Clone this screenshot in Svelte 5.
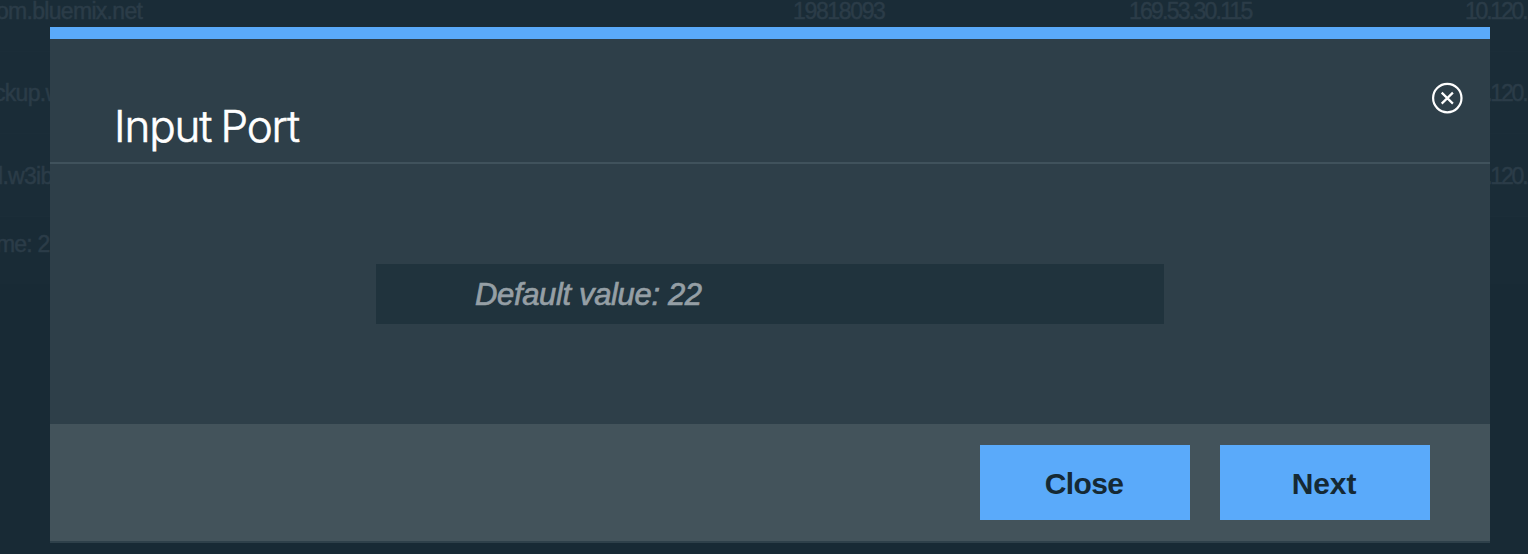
<script>
  const rows = [
    { name: 'om.bluemix.net', shift: -4, id: '19818093', publicIp: '169.53.30.115', privateIp: '10.120.' },
    { name: 'ckup.w', shift: -6, id: '', publicIp: '', privateIp: '10.120.' },
    { name: 'l.w3ib', shift: -2, id: '', publicIp: '', privateIp: '10.120.1' }
  ];
</script>

<div class="page">
  <div class="table">
    {#each rows as row}
      <div class="row">
        <span class="name" style="margin-left: {row.shift}px">{row.name}</span>
        <span class="id">{row.id}</span>
        <span class="public">{row.publicIp}</span>
        <span class="private">{row.privateIp}</span>
      </div>
    {/each}
    <div class="summary"><span>me: 2</span></div>
  </div>

  <div class="dialog" role="dialog" aria-labelledby="dialog-title">
    <header>
      <h1 id="dialog-title">Input Port</h1>
      <button class="dismiss" aria-label="Close dialog">
        <svg width="32" height="32" viewBox="0 0 32 32" fill="none" stroke="#fff" stroke-width="2.2">
          <circle cx="16.3" cy="16.1" r="14.2" />
          <path d="M10.7 10.6 21.9 21.6M21.9 10.6 10.7 21.6" />
        </svg>
      </button>
    </header>
    <main>
      <div class="field"><span>Default value: 22</span></div>
    </main>
    <footer>
      <button class="action"><span class="close">Close</span></button>
      <button class="action"><span class="next">Next</span></button>
    </footer>
  </div>
</div>

<style>
  :global(body) { margin: 0; }
  .page {
    position: relative;
    width: 1528px;
    height: 554px;
    overflow: hidden;
    background: #182a35;
    font-family: "Liberation Sans", Arial, sans-serif;
  }
  .table {
    margin-top: -31px;
    color: #2b3c48;
    font-size: 23px;
    -webkit-text-stroke: 0.5px #2b3c48;
  }
  .row {
    display: grid;
    grid-template-columns: 793px 336px 336px 200px;
    align-items: center;
    box-sizing: border-box;
    height: 82.5px;
    padding-top: 3px;
    background: #1a2c37;
    border-bottom: 1px solid #1b2d38;
    white-space: nowrap;
  }
  .name { letter-spacing: -0.7px; }
  .id { letter-spacing: -1.35px; }
  .public { letter-spacing: -1.75px; }
  .private { letter-spacing: -2.2px; }
  .summary {
    display: flex;
    align-items: center;
    height: 67px;
    padding-bottom: 11px;
    box-sizing: border-box;
    background: #192b36;
  }
  .summary span { margin-left: -4px; letter-spacing: -0.8px; }
  .dialog {
    position: absolute;
    top: 27px;
    left: 50px;
    width: 1440px;
    height: 516px;
    box-sizing: border-box;
    display: flex;
    flex-direction: column;
    background: #2e3f49;
    border-top: 12px solid #5aaafa;
    border-bottom: 2px solid #2e404a;
  }
  header {
    display: flex;
    justify-content: space-between;
    height: 125px;
    box-sizing: border-box;
    padding: 43px 27px 0 64px;
    border-bottom: 2px solid #40525c;
  }
  h1 {
    margin: 17px 0 0;
    font: 300 44px/54px Inter, "Liberation Sans", sans-serif;
    letter-spacing: -1.15px;
    word-spacing: -2px;
    color: #fff;
    -webkit-text-stroke: 0.6px #fff;
  }
  button { border: 0; padding: 0; font: inherit; }
  .dismiss { width: 32px; height: 32px; background: none; }
  .dismiss svg { display: block; }
  main { flex: 1; display: flex; justify-content: center; padding-top: 100px; }
  .field {
    width: 788px;
    height: 60px;
    box-sizing: border-box;
    padding: 1px 0 0 99px;
    background: #20333d;
    color: #959fa5;
    font-size: 31px;
    font-style: italic;
    line-height: 60px;
    letter-spacing: -0.35px;
    -webkit-text-stroke: 0.7px #959fa5;
  }
  footer {
    display: flex;
    justify-content: flex-end;
    gap: 30px;
    height: 117px;
    box-sizing: border-box;
    padding: 21px 60px 0;
    background: #43535b;
  }
  .action {
    width: 210px;
    height: 75px;
    padding: 2px 2px 0 0;
    background: #5aaafa;
    color: #152934;
    font-size: 30px;
    font-weight: 700;
    line-height: 73px;
  }
  .close { letter-spacing: -0.6px; }
  .next { letter-spacing: -0.1px; }
</style>
